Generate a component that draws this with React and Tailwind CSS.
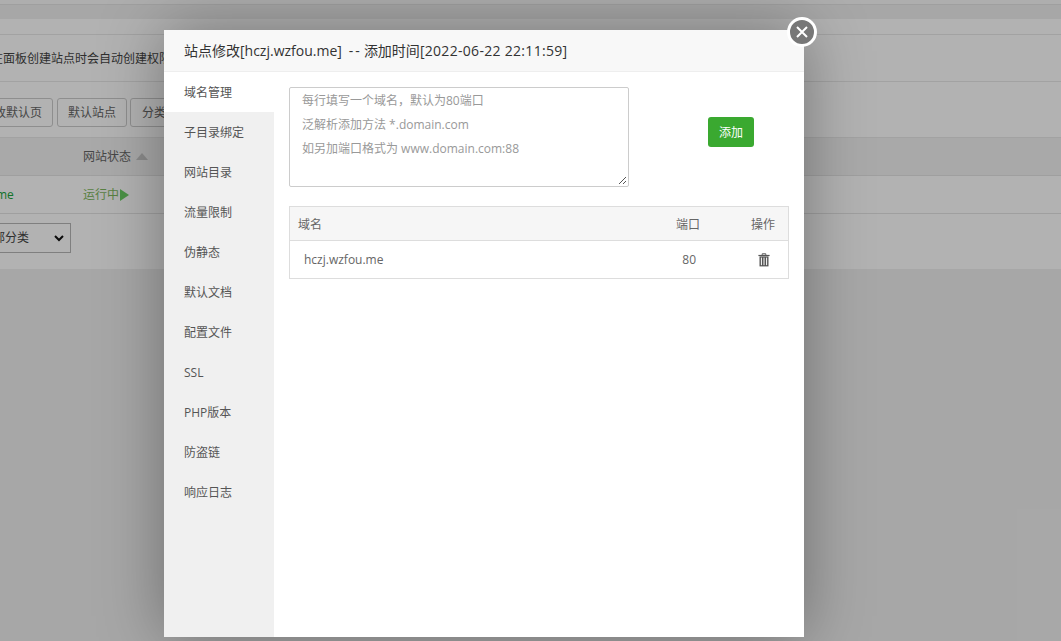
import React from "react";

const nav = ["域名管理","子目录绑定","网站目录","流量限制","伪静态","默认文档","配置文件","SSL","PHP版本","防盗链","响应日志"];

function Trash() {
  return (
    <svg width="12" height="14" viewBox="0 0 12 14" fill="none">
      <path d="M4.2 1.9V.8h3.6v1.1" stroke="#555" strokeWidth="1" />
      <path d="M0.4 2.5h11.2" stroke="#555" strokeWidth="1.2" />
      <path d="M1.5 3.4h9v10h-9z" fill="#555" />
      <path d="M3.4 4.6v7.6M6 4.6v7.6M8.6 4.6v7.6" stroke="#fff" strokeWidth="1" />
    </svg>
  );
}

export default function App() {
  return (
    <div className="relative h-[641px] w-[1061px] overflow-hidden bg-[#f0f0f0] text-[12px] text-[#666] font-['Open_Sans','Noto_Sans_CJK_SC',sans-serif]">
      <div className="flex h-full flex-col">
        <div className="h-[5px] border-b border-[#e4e4e4] bg-[#fafafa]" />
        <div className="h-[14px] bg-[#f0f0f0]" />
        <div className="bg-white">
          <div className="h-[16px] border-b border-[#e8e8e8]" />
          <div className="flex h-[47px] items-center overflow-hidden whitespace-nowrap border-b border-[#e8e8e8] text-[12px] text-[#444]">
            <span className="-ml-[9px] mt-[1px]">在面板创建站点时会自动创建权限配置</span>
          </div>
          <div className="flex h-[56px] items-start overflow-hidden whitespace-nowrap border-b border-[#e8e8e8] pt-[16px]">
            <div className="-ml-[20px] flex h-[29px] w-[73px] items-center justify-end rounded-[3px] border border-[#ccc] pr-[10px]">改默认页</div>
            <div className="ml-[4px] flex h-[29px] w-[70px] items-center justify-center rounded-[3px] border border-[#ccc]">默认站点</div>
            <div className="ml-[3px] flex h-[29px] w-[60px] items-center rounded-[3px] border border-[#ccc] pl-[11px]">分类</div>
          </div>
          <div className="flex h-[38px] items-center border-b border-[#e4e4e4] bg-[#f2f2f2] pl-[83px]">
            <span className="mt-[1px]">网站状态</span>
            <span className="ml-[5px] h-0 w-0 border-x-[6px] border-b-[7px] border-x-transparent border-b-[#c8c8c8]" />
          </div>
          <div className="flex h-[38px] items-center border-b border-[#e4e4e4]">
            <span className="-ml-[4px] mt-[1px] w-[87px] text-[#20a53a]">me</span>
            <span className="mt-[1px] text-[#7fb85f]">运行中</span>
            <span className="ml-[1px] h-0 w-0 border-y-[6px] border-l-[9px] border-y-transparent border-l-[#6bcf64]" />
          </div>
          <div className="flex h-[55px] items-start pt-[9px]">
            <div className="-ml-[10px] flex h-[30px] w-[81px] items-center justify-between border border-[#b7b7b7] pl-[2px] pr-[6px] text-[12px] text-[#444]">
              <span>部分类</span>
              <svg width="10" height="7" viewBox="0 0 10 7" fill="none"><path d="M1 1l4 4 4-4" stroke="#111" strokeWidth="2" /></svg>
            </div>
          </div>
        </div>
        <div className="flex-1 bg-[#f0f0f0]" />
      </div>

      <div className="absolute inset-0 bg-black/30" />

      <div className="absolute left-[164px] top-[30px] flex h-[607px] w-[640px] flex-col bg-white shadow-[0_0_60px_rgba(0,0,0,0.35)]">
        <div className="flex h-[42px] shrink-0 items-center whitespace-pre border-b border-[#eee] bg-[#f8f8f8] pl-[20px] text-[14px] text-[#333]">
          <span>站点修改[hczj.wzfou.me]</span>
          <span className="ml-[7px] tracking-[2px]">--</span>
          <span className="ml-[2px]">添加时间</span>
          <span className="tracking-[0.3px]">[2022-06-22 22:11:59]</span>
        </div>
        <div className="flex min-h-0 flex-1">
          <div className="w-[110px] shrink-0 bg-[#f0f0f0]">
            {nav.map((n, i) => (
              <div key={n} className={`flex h-[40px] items-center pl-[20px] pt-[2px] text-[12px] text-[#555] ${i === 0 ? "bg-white" : ""}`}>{n}</div>
            ))}
          </div>
          <div className="flex-1 pl-[15px] pr-[15px] pt-[15px]">
            <div className="flex items-start">
              <div className="relative h-[100px] w-[340px] overflow-hidden rounded-[2px] border border-[#ccc] pl-[12px] pt-[1px] text-[12px] leading-[24px] text-[#999]">
                <div>每行填写一个域名，默认为80端口</div>
                <div>泛解析添加方法 *.domain.com</div>
                <div>如另加端口格式为 www.domain.com:88</div>
                <svg className="absolute bottom-[1px] right-[1px]" width="9" height="9" viewBox="0 0 9 9" fill="none">
                  <path d="M1 8L8 1M5 8l3-3" stroke="#555" strokeWidth="1" />
                </svg>
              </div>
              <button className="ml-[79px] mt-[30px] flex h-[30px] w-[46px] items-center justify-center rounded-[3px] bg-[#3aa930] pt-[2px] text-[12px] text-white">添加</button>
            </div>
            <div className="mt-[19px] w-[500px] border border-[#ddd]">
              <div className="flex h-[34px] items-center border-b border-[#ddd] bg-[#f6f6f6] pl-[8px] pr-[13px] pt-[2px] text-[12px]">
                <span className="flex-1">域名</span>
                <span className="w-[26px]">端口</span>
                <span className="ml-[49px] w-[24px]">操作</span>
              </div>
              <div className="flex h-[37px] items-center pl-[14px] pr-[18px] text-[12px]">
                <span className="flex-1">hczj.wzfou.me</span>
                <span className="mr-[62px]">80</span>
                <Trash />
              </div>
            </div>
          </div>
        </div>
      </div>

      <button className="absolute left-[787px] top-[17px] flex h-[30px] w-[30px] items-center justify-center rounded-full border-[3px] border-white bg-[#777]">
        <svg width="14" height="14" viewBox="0 0 14 14" fill="none"><path d="M2 2l10 10M12 2L2 12" stroke="#fff" strokeWidth="2" /></svg>
      </button>
    </div>
  );
}
